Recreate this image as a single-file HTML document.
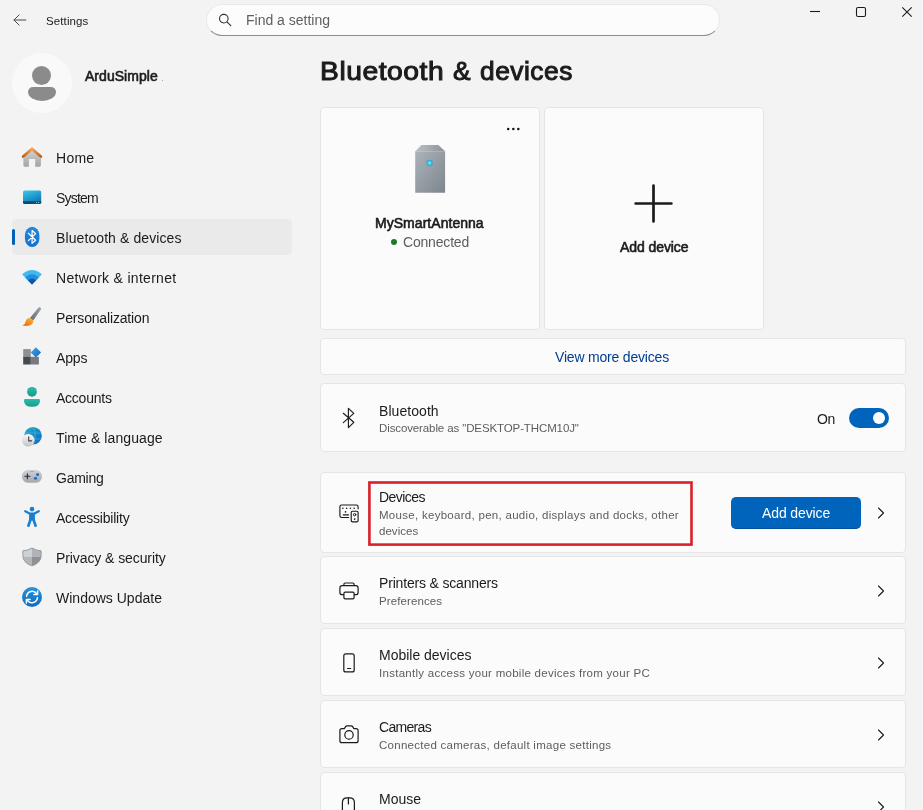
<!DOCTYPE html>
<html>
<head>
<meta charset="utf-8">
<title>Settings</title>
<style>
*{box-sizing:border-box;margin:0;padding:0}
html,body{width:923px;height:810px;overflow:hidden;background:#f3f3f3}
body{font-family:"Liberation Sans",sans-serif;color:#1b1b1b;position:relative;font-size:14px}
.a{position:absolute;white-space:nowrap}
.t{position:absolute;white-space:nowrap;line-height:20px;height:20px;transform-origin:0 50%;will-change:transform;font-size:14px;letter-spacing:0}
.card{position:absolute;background:#fbfbfb;border:1px solid #e5e5e5;border-radius:4px}
.nav{left:56px;color:#1b1b1b}
.t.sub{font-size:11.5px;color:#5d5d5d}
.chev{position:absolute;left:876px;width:10px;height:12px}
svg{position:absolute;overflow:visible}
.t.ttl{height:40px;line-height:40px;font-size:26px;letter-spacing:.4px;color:#1b1b1b;-webkit-text-stroke:1px #1b1b1b}
.sb{-webkit-text-stroke:.6px #1b1b1b;letter-spacing:.3px}
/*FIT*/
#settings{left:46px!important;letter-spacing:0.114px;}
#find{left:246px!important;letter-spacing:-0.008px;}
#ardu{left:85px!important;letter-spacing:0.033px;}
#n1{left:56px!important;letter-spacing:0.267px;}
#n2{left:56px!important;letter-spacing:-0.780px;}
#n3{left:56px!important;letter-spacing:0.094px;}
#n4{left:56px!important;letter-spacing:0.294px;}
#n5{left:56px!important;letter-spacing:-0.164px;}
#n6{left:56px!important;letter-spacing:-0.133px;}
#n7{left:56px!important;letter-spacing:-0.243px;}
#n8{left:56px!important;letter-spacing:0.093px;}
#n9{left:56px!important;letter-spacing:-0.260px;}
#n10{left:56px!important;letter-spacing:-0.217px;}
#n11{left:56px!important;letter-spacing:-0.088px;}
#n12{left:56px!important;letter-spacing:0.008px;}
#title1{left:320px!important;letter-spacing:0.500px;transform:scaleX(1.086);}
#title2{left:453px!important;letter-spacing:0.500px;transform:scaleX(1.011);}
#title3{left:480px!important;letter-spacing:0.500px;transform:scaleX(1.013);}
#msa{left:375px!important;letter-spacing:0.038px;}
#conn{left:403px!important;letter-spacing:-0.188px;}
#adddev{left:620px!important;letter-spacing:-0.078px;}
#viewmore{left:555px!important;letter-spacing:-0.194px;}
#bt{left:379px!important;letter-spacing:0.062px;}
#btsub{left:379px!important;letter-spacing:-0.113px;}
#on{left:817px!important;letter-spacing:-0.300px;}
#dv{left:379px!important;letter-spacing:-0.533px;}
#dvsub1{left:379px!important;letter-spacing:0.287px;}
#dvsub2{left:379px!important;letter-spacing:0.033px;}
#btntxt{left:762px!important;letter-spacing:-0.122px;}
#pr{left:379px!important;letter-spacing:-0.172px;}
#prsub{left:379px!important;letter-spacing:0.100px;}
#mb{left:379px!important;letter-spacing:-0.015px;}
#mbsub{left:379px!important;letter-spacing:0.275px;}
#cm{left:379px!important;letter-spacing:-0.683px;}
#cmsub{left:379px!important;letter-spacing:0.272px;}
#ms{left:379px!important;letter-spacing:0.000px;}
/*ENDFIT*/
</style>
</head>
<body>

<!-- ===== title bar ===== -->
<svg class="a" style="left:13px;top:14px" width="14" height="12" viewBox="0 0 14 12"><path d="M6.1 0.9 L1 6 L6.1 11.1 M1 6 H12.8" fill="none" stroke="#4a4a4a" stroke-width="1" stroke-linecap="round" stroke-linejoin="round"/></svg>
<div class="t" id="settings" style="left:46px;top:11px;font-size:11.5px">Settings</div>

<div class="a" id="search" style="left:206px;top:4px;width:514px;height:31.5px;border-radius:16px;background:#fcfcfc;border:1px solid #e9e9e9;border-bottom-color:#8c8c8c"></div>
<svg class="a" style="left:218px;top:13px" width="14" height="14" viewBox="0 0 14 14"><circle cx="5.8" cy="5.65" r="4.3" fill="none" stroke="#333" stroke-width="1.1"/><path d="M8.95 8.8 L12.8 12.6" stroke="#333" stroke-width="1.15" stroke-linecap="round"/></svg>
<div class="t" id="find" style="left:246px;top:10px;color:#5f5f5f">Find a setting</div>

<!-- window controls -->
<svg class="a" style="left:810px;top:6px" width="10" height="12" viewBox="0 0 10 12"><path d="M0 5.5 H10" stroke="#1b1b1b" stroke-width="1.1"/></svg>
<svg class="a" style="left:856px;top:7px" width="10" height="10" viewBox="0 0 10 10"><rect x="0.5" y="0.5" width="9" height="9" rx="1.5" fill="none" stroke="#1b1b1b" stroke-width="1.1"/></svg>
<svg class="a" style="left:902px;top:7px" width="10" height="10" viewBox="0 0 10 10"><path d="M0.3 0.3 L9.7 9.7 M9.7 0.3 L0.3 9.7" stroke="#1b1b1b" stroke-width="1.1"/></svg>

<!-- ===== profile ===== -->
<div class="a" style="left:12px;top:53px;width:60px;height:60px;border-radius:50%;background:#f9f9f9"></div>
<div class="a" style="left:32px;top:66px;width:19px;height:19px;border-radius:50%;background:#8b8b8b"></div>
<div class="a" style="left:28px;top:87px;width:28px;height:14px;border-radius:5px 5px 14px 14px / 5px 5px 9px 9px;background:#8b8b8b"></div>
<div class="t sb" id="ardu" style="left:84px;top:66px">ArduSimple</div>

<div class="a" style="left:162px;top:80px;width:1px;height:1px;background:#a8a8a8"></div>
<!-- ===== sidebar ===== -->
<div class="a" style="left:12px;top:219px;width:280px;height:35.5px;border-radius:4px;background:#eaeaea"></div>
<div class="a" style="left:12px;top:229px;width:3px;height:16px;border-radius:2px;background:#005fb8"></div>

<div class="t nav" id="n1" style="top:148px">Home</div>
<div class="t nav" id="n2" style="top:188px">System</div>
<div class="t nav" id="n3" style="top:228px">Bluetooth &amp; devices</div>
<div class="t nav" id="n4" style="top:268px">Network &amp; internet</div>
<div class="t nav" id="n5" style="top:308px">Personalization</div>
<div class="t nav" id="n6" style="top:348px">Apps</div>
<div class="t nav" id="n7" style="top:388px">Accounts</div>
<div class="t nav" id="n8" style="top:428px">Time &amp; language</div>
<div class="t nav" id="n9" style="top:468px">Gaming</div>
<div class="t nav" id="n10" style="top:508px">Accessibility</div>
<div class="t nav" id="n11" style="top:548px">Privacy &amp; security</div>
<div class="t nav" id="n12" style="top:588px">Windows Update</div>

<!-- NAVICONS -->
<svg width="0" height="0" style="position:absolute"><defs>
<linearGradient id="gRoof" x1="0" y1="0" x2="0" y2="1"><stop offset="0" stop-color="#f3a552"/><stop offset="1" stop-color="#b9641f"/></linearGradient>
<linearGradient id="gHouse" x1="0" y1="0" x2="0" y2="1"><stop offset="0" stop-color="#d4d4d4"/><stop offset="1" stop-color="#a3a3a3"/></linearGradient>
<linearGradient id="gSys" x1="0" y1="0" x2="0.5" y2="1"><stop offset="0" stop-color="#3acbea"/><stop offset="1" stop-color="#0f78b4"/></linearGradient>
<linearGradient id="gBt" x1="0" y1="0" x2="0" y2="1"><stop offset="0" stop-color="#2589de"/><stop offset="1" stop-color="#0f72cc"/></linearGradient>
<linearGradient id="gHandle" x1="1" y1="0" x2="0" y2="1"><stop offset="0" stop-color="#a0a6ab"/><stop offset="1" stop-color="#646b71"/></linearGradient>
<linearGradient id="gTip" x1="0.8" y1="0" x2="0.2" y2="1"><stop offset="0" stop-color="#f9b43f"/><stop offset="1" stop-color="#e4701a"/></linearGradient>
<linearGradient id="gDia" x1="0" y1="0" x2="1" y2="1"><stop offset="0" stop-color="#42a8f0"/><stop offset="1" stop-color="#0c66bb"/></linearGradient>
<linearGradient id="gAcc" x1="0" y1="0" x2="0" y2="1"><stop offset="0" stop-color="#2cbcaa"/><stop offset="1" stop-color="#17998a"/></linearGradient>
<linearGradient id="gGlobe" x1="0" y1="0" x2="1" y2="1"><stop offset="0" stop-color="#22b4c8"/><stop offset="1" stop-color="#0f62c4"/></linearGradient>
<linearGradient id="gClock" x1="0" y1="0" x2="0" y2="1"><stop offset="0" stop-color="#fafafa"/><stop offset="1" stop-color="#c4c4c4"/></linearGradient>
<linearGradient id="gPad" x1="0" y1="0" x2="0" y2="1"><stop offset="0" stop-color="#cfd2d6"/><stop offset="1" stop-color="#a4a8ad"/></linearGradient>
<linearGradient id="gUpd" x1="0" y1="0" x2="0" y2="1"><stop offset="0" stop-color="#2592de"/><stop offset="1" stop-color="#0f6cbd"/></linearGradient>
</defs></svg>

<!-- Home -->
<svg class="a" style="left:20px;top:146px" width="24" height="22" viewBox="20 146 24 22">
<path d="M23.4 156.5 L32 149.5 L40.9 156.5 V165.3 Q40.9 166.7 39.5 166.7 H35.2 V159 H28.9 V166.7 H24.8 Q23.4 166.7 23.4 165.3Z" fill="url(#gHouse)"/>
<path d="M23.1 156.6 L32 148.7 L40.9 156.6" fill="none" stroke="url(#gRoof)" stroke-width="2.7" stroke-linecap="round" stroke-linejoin="round"/>
</svg>

<!-- System -->
<svg class="a" style="left:22px;top:189px" width="20" height="16" viewBox="22 189 20 16">
<rect x="23" y="190.4" width="18.2" height="13.5" rx="1.6" fill="url(#gSys)"/>
<path d="M23 201.2 H41.2 V202.3 Q41.2 203.9 39.6 203.9 H24.6 Q23 203.9 23 202.3Z" fill="#0c4a7a"/>
<circle cx="36.6" cy="202.6" r="0.6" fill="#9ad8f0"/><circle cx="38.7" cy="202.6" r="0.6" fill="#9ad8f0"/>
</svg>

<!-- Bluetooth -->
<svg class="a" style="left:24px;top:226px" width="16" height="22" viewBox="24 226 16 22">
<rect x="24.9" y="226.8" width="14.5" height="20.3" rx="7.25" ry="8.6" fill="url(#gBt)"/>
<path d="M28.4 233.3 L35.6 240.3 L32.1 243.4 V230.5 L35.6 233.6 L28.4 240.6" fill="none" stroke="#fff" stroke-width="1.25" stroke-linejoin="round" stroke-linecap="round"/>
</svg>

<!-- Network -->
<svg class="a" style="left:21px;top:269px" width="22" height="17" viewBox="21 269 22 17">
<path d="M32 284.6 L22.1 274.3 Q32 265.8 41.9 274.3Z" fill="#41b8f0"/>
<path d="M32 284.6 L25.1 277.4 Q32 271.3 38.9 277.4Z" fill="#1f8fdc"/>
<path d="M32 284.6 L28 280.4 Q32 276.8 36 280.4Z" fill="#0f57a8"/>
</svg>

<!-- Personalization -->
<svg class="a" style="left:21px;top:306px" width="22" height="22" viewBox="21 306 22 22">
<path d="M38.6 307.5 Q40.9 306.3 41.2 309.1 L33.3 320.6 L29.9 318.1Z" fill="url(#gHandle)"/>
<path d="M30 317.9 Q26.3 317.6 25.7 321.5 Q25.3 324.2 22.4 325.5 Q27.5 326.7 31 324.7 Q33.7 323.1 33.4 320.5Z" fill="url(#gTip)"/>
</svg>

<!-- Apps -->
<svg class="a" style="left:22px;top:346px" width="20" height="20" viewBox="22 346 20 20">
<rect x="23.2" y="349.1" width="7.6" height="7.8" fill="#8d9196"/>
<rect x="23.2" y="356.8" width="7.6" height="7.7" fill="#45494d"/>
<rect x="30.8" y="356.8" width="8.1" height="7.7" fill="#777b80"/>
<path d="M35.9 347.3 L41.1 352.4 L35.9 357.6 L30.8 352.4Z" fill="url(#gDia)"/>
</svg>

<!-- Accounts -->
<svg class="a" style="left:23px;top:386px" width="18" height="22" viewBox="23 386 18 22">
<circle cx="32" cy="391.8" r="4.9" fill="url(#gAcc)"/>
<path d="M25.4 399.1 H38.6 Q40 399.1 40 400.5 Q40 406.8 32 406.8 Q24 406.8 24 400.5 Q24 399.1 25.4 399.1Z" fill="url(#gAcc)"/>
</svg>

<!-- Time & language -->
<svg class="a" style="left:21px;top:426px" width="22" height="22" viewBox="21 426 22 22">
<circle cx="33" cy="435.7" r="8.8" fill="url(#gGlobe)"/>
<path d="M33 427 Q37.5 435.7 33 444.4 M24.6 433 H41.4 M25 439 H41" fill="none" stroke="#5fc3e8" stroke-width="0.6" opacity="0.8"/>
<circle cx="28.2" cy="440.2" r="6.3" fill="url(#gClock)"/>
<path d="M28.7 436.8 V440.9 H31.6" fill="none" stroke="#4a3c44" stroke-width="1.1" stroke-linecap="round" stroke-linejoin="round"/>
</svg>

<!-- Gaming -->
<svg class="a" style="left:21px;top:469px" width="22" height="15" viewBox="21 469 22 15">
<rect x="21.9" y="470" width="20.1" height="12.8" rx="6.4" fill="url(#gPad)"/>
<path d="M27.4 473.8 V478.8 M24.9 476.3 H29.9" stroke="#2a2a2a" stroke-width="1.1" stroke-linecap="round"/>
<circle cx="37.6" cy="474.5" r="1.55" fill="#1c6fc6"/><circle cx="35.5" cy="478.3" r="1.55" fill="#1c6fc6"/>
<circle cx="31" cy="471.3" r="0.45" fill="#3a3a3a"/><circle cx="33" cy="471.3" r="0.45" fill="#3a3a3a"/>
</svg>

<!-- Accessibility -->
<svg class="a" style="left:23px;top:505px" width="18" height="23" viewBox="23 505 18 23">
<circle cx="32" cy="509.1" r="2.35" fill="#1b7fd0"/>
<path d="M25.3 511.3 L30 513.7 H34 L38.7 511.3" fill="none" stroke="#1b7fd0" stroke-width="2.4" stroke-linecap="round" stroke-linejoin="round"/>
<path d="M29.1 513 H34.9 V520.6 H29.1Z" fill="#1b7fd0"/>
<path d="M30.5 519.6 L28.4 525.7 M33.5 519.6 L35.6 525.7" fill="none" stroke="#1b7fd0" stroke-width="2.7" stroke-linecap="round"/>
</svg>

<!-- Privacy -->
<svg class="a" style="left:22px;top:547px" width="20" height="20" viewBox="22 547 20 20">
<clipPath id="shc"><path d="M32 548 Q36 550.6 41.1 550.8 V556 Q41.1 562.6 32 565.9 Q22.9 562.6 22.9 556 V550.8 Q28 550.6 32 548Z"/></clipPath>
<g clip-path="url(#shc)">
<rect x="22" y="547" width="10" height="9.6" fill="#cfd2d5"/>
<rect x="32" y="547" width="10" height="9.6" fill="#b0b4b8"/>
<rect x="22" y="556.6" width="10" height="10" fill="#b3b7bb"/>
<rect x="32" y="556.6" width="10" height="10" fill="#8e9297"/>
</g>
<path d="M32 548 Q36 550.6 41.1 550.8 V556 Q41.1 562.6 32 565.9 Q22.9 562.6 22.9 556 V550.8 Q28 550.6 32 548Z" fill="none" stroke="#8f9398" stroke-width="0.9"/>
</svg>

<!-- Windows Update -->
<svg class="a" style="left:21px;top:586px" width="22" height="22" viewBox="21 586 22 22">
<circle cx="32" cy="597" r="10" fill="url(#gUpd)"/>
<path d="M26.6 596.2 A5.5 5.5 0 0 1 36.6 593.6" fill="none" stroke="#fff" stroke-width="1.5" stroke-linecap="round"/>
<path d="M37.6 590.9 V594.6 H33.9" fill="none" stroke="#fff" stroke-width="1.5" stroke-linecap="round" stroke-linejoin="round"/>
<path d="M37.4 597.8 A5.5 5.5 0 0 1 27.4 600.4" fill="none" stroke="#fff" stroke-width="1.5" stroke-linecap="round"/>
<path d="M26.4 603.1 V599.4 H30.1" fill="none" stroke="#fff" stroke-width="1.5" stroke-linecap="round" stroke-linejoin="round"/>
</svg>

<!-- /NAVICONS -->

<!-- ===== main ===== -->
<div class="t ttl" id="title1" style="left:320px;top:51px">Bluetooth</div>
<div class="t ttl" id="title2" style="left:452px;top:51px">&amp;</div>
<div class="t ttl" id="title3" style="left:480px;top:51px">devices</div>

<div class="card" style="left:320px;top:107px;width:220px;height:223px"></div>
<div class="card" style="left:544px;top:107px;width:220px;height:223px"></div>


<!-- card 1 -->
<svg class="a" style="left:505px;top:126px" width="16" height="6" viewBox="505 126 16 6"><circle cx="508.2" cy="128.9" r="1.25" fill="#111"/><circle cx="513.3" cy="128.9" r="1.25" fill="#111"/><circle cx="518.3" cy="128.9" r="1.25" fill="#111"/></svg>
<svg class="a" style="left:414px;top:144px" width="32" height="50" viewBox="414 144 32 50">
<defs><linearGradient id="tw" x1="0" y1="0" x2="1" y2="1"><stop offset="0" stop-color="#adb3ba"/><stop offset="1" stop-color="#7d858d"/></linearGradient>
<linearGradient id="lid" x1="0" y1="0" x2="1" y2="0"><stop offset="0" stop-color="#bcc1c7"/><stop offset="1" stop-color="#8c939a"/></linearGradient>
<radialGradient id="led"><stop offset="0" stop-color="#8eeeff"/><stop offset="0.6" stop-color="#2dc4e6"/><stop offset="1" stop-color="#3f9fbe"/></radialGradient></defs>
<path d="M415.2 151.3 H445.1 V192.3 Q445.1 192.8 444.6 192.8 H415.7 Q415.2 192.8 415.2 192.3Z" fill="url(#tw)"/>
<path d="M421.4 145.1 H438.4 L445.1 151.3 H415.2Z" fill="url(#lid)"/>
<circle cx="429.6" cy="163" r="3.2" fill="url(#led)"/>
</svg>
<div class="t sb" id="msa" style="left:374px;top:213px">MySmartAntenna</div>
<div class="a" style="left:391px;top:239px;width:6px;height:6px;border-radius:50%;background:#1b7a2a"></div>
<div class="t" id="conn" style="left:403px;top:232px;color:#5d5d5d">Connected</div>

<!-- card 2 -->
<svg class="a" style="left:634px;top:184px" width="38" height="38" viewBox="0 0 38 38"><path d="M19.5 1.6 V37.4 M1.6 19.5 H37.4" stroke="#1b1b1b" stroke-width="2.7" stroke-linecap="round"/></svg>
<div class="t sb" id="adddev" style="left:619px;top:237px">Add device</div>


<div class="card" style="left:320px;top:338px;width:586px;height:37px"></div>
<div class="t" id="viewmore" style="left:555px;top:347px;color:#003e92">View more devices</div>

<div class="card" style="left:320px;top:383px;width:586px;height:69px"></div>
<div class="card" style="left:320px;top:472px;width:586px;height:81px"></div>
<div class="card" style="left:320px;top:556px;width:586px;height:68px"></div>
<div class="card" style="left:320px;top:628px;width:586px;height:68px"></div>
<div class="card" style="left:320px;top:700px;width:586px;height:68px"></div>
<div class="card" style="left:320px;top:772px;width:586px;height:68px"></div>


<!-- Bluetooth row -->
<svg class="a" style="left:342px;top:407px" width="14" height="22" viewBox="342 407 14 22"><path d="M343.3 413.3 L353.8 422.3 L348.4 427.6 V408.4 L353.8 413.4 L343.3 422.6" fill="none" stroke="#1b1b1b" stroke-width="1.15" stroke-linejoin="round" stroke-linecap="round"/></svg>
<div class="t" id="bt" style="left:379px;top:401px">Bluetooth</div>
<div class="t sub" id="btsub" style="left:379px;top:418px">Discoverable as &quot;DESKTOP-THCM10J&quot;</div>
<div class="t" id="on" style="left:817px;top:409px">On</div>
<div class="a" style="left:849px;top:408px;width:40px;height:20px;border-radius:10px;background:#0064bc"></div>
<div class="a" style="left:873px;top:412px;width:12px;height:12px;border-radius:50%;background:#fff"></div>

<!-- Devices row -->
<div class="t" id="dv" style="left:379px;top:487px">Devices</div>
<div class="t sub" id="dvsub1" style="left:379px;top:505px">Mouse, keyboard, pen, audio, displays and docks, other</div>
<div class="t sub" id="dvsub2" style="left:379px;top:521px">devices</div>
<svg class="a" id="red" style="left:366px;top:479px" width="330" height="70" viewBox="366 479 330 70"><rect x="369.4" y="482.5" width="322.1" height="62.1" fill="none" stroke="#d9212b" stroke-width="2.6"/></svg>
<div class="a" id="btn" style="left:731px;top:497px;width:130px;height:32px;border-radius:5px;background:#0064bc;border-bottom:1px solid #00509a"></div>
<div class="t" id="btntxt" style="left:762px;top:503px;color:#fff">Add device</div>

<!-- Printers -->
<div class="t" id="pr" style="left:379px;top:573px">Printers &amp; scanners</div>
<div class="t sub" id="prsub" style="left:379px;top:591px">Preferences</div>
<!-- Mobile -->
<div class="t" id="mb" style="left:379px;top:645px">Mobile devices</div>
<div class="t sub" id="mbsub" style="left:379px;top:663px">Instantly access your mobile devices from your PC</div>
<!-- Cameras -->
<div class="t" id="cm" style="left:379px;top:717px">Cameras</div>
<div class="t sub" id="cmsub" style="left:379px;top:735px">Connected cameras, default image settings</div>
<!-- Mouse -->
<div class="t" id="ms" style="left:379px;top:789px">Mouse</div>

<!-- chevrons -->
<svg class="a" style="left:877px;top:507px" width="8" height="12" viewBox="0 0 8 12"><path d="M1.5 1 L6.5 6 L1.5 11" fill="none" stroke="#1b1b1b" stroke-width="1.1" stroke-linecap="round" stroke-linejoin="round"/></svg>
<svg class="a" style="left:877px;top:585px" width="8" height="12" viewBox="0 0 8 12"><path d="M1.5 1 L6.5 6 L1.5 11" fill="none" stroke="#1b1b1b" stroke-width="1.1" stroke-linecap="round" stroke-linejoin="round"/></svg>
<svg class="a" style="left:877px;top:657px" width="8" height="12" viewBox="0 0 8 12"><path d="M1.5 1 L6.5 6 L1.5 11" fill="none" stroke="#1b1b1b" stroke-width="1.1" stroke-linecap="round" stroke-linejoin="round"/></svg>
<svg class="a" style="left:877px;top:729px" width="8" height="12" viewBox="0 0 8 12"><path d="M1.5 1 L6.5 6 L1.5 11" fill="none" stroke="#1b1b1b" stroke-width="1.1" stroke-linecap="round" stroke-linejoin="round"/></svg>
<svg class="a" style="left:877px;top:801px" width="8" height="12" viewBox="0 0 8 12"><path d="M1.5 1 L6.5 6 L1.5 11" fill="none" stroke="#1b1b1b" stroke-width="1.1" stroke-linecap="round" stroke-linejoin="round"/></svg>

<!-- ROWICONS -->
<!-- devices icon -->
<svg class="a" style="left:338px;top:503px" width="22" height="21" viewBox="338 503 22 21" fill="none" stroke="#1b1b1b" stroke-width="1.15" stroke-linecap="round" stroke-linejoin="round">
<path d="M348.6 517.5 H341.6 Q339.9 517.5 339.9 515.8 V506.7 Q339.9 505 341.6 505 H356.4 Q358.1 505 358.1 506.7 V508.8"/>
<rect x="351.2" y="511.2" width="6.9" height="10.7" rx="1.4"/>
<circle cx="354.65" cy="514.7" r="1.2" stroke-width="1"/>
<g fill="#1b1b1b" stroke="none"><circle cx="354.65" cy="519.1" r="0.85"/>
<circle cx="342.9" cy="508.2" r="0.8"/><circle cx="346.7" cy="508.2" r="0.8"/><circle cx="350.4" cy="508.2" r="0.8"/><circle cx="354.2" cy="508.2" r="0.8"/><circle cx="345.5" cy="511.9" r="0.8"/></g>
<path d="M343.3 514.9 H348.5" stroke-width="1.2"/>
</svg>

<!-- printer -->
<svg class="a" style="left:338px;top:581px" width="22" height="20" viewBox="338 581 22 20" fill="none" stroke="#1b1b1b" stroke-width="1.2" stroke-linejoin="round">
<path d="M343.9 585.6 V584.2 Q343.9 583 345.1 583 H352.9 Q354.1 583 354.1 584.2 V585.6"/>
<path d="M343.9 594.7 H342.2 Q339.9 594.7 339.9 592.4 V588 Q339.9 585.7 342.2 585.7 H355.8 Q358.1 585.7 358.1 588 V592.4 Q358.1 594.7 355.8 594.7 H354.1"/>
<rect x="343.9" y="592.2" width="10.2" height="6.6" rx="1.3"/>
</svg>

<!-- phone -->
<svg class="a" style="left:342px;top:652px" width="14" height="22" viewBox="342 652 14 22" fill="none" stroke="#1b1b1b" stroke-width="1.2" stroke-linecap="round">
<rect x="343.8" y="653.9" width="10.4" height="18" rx="2"/>
<path d="M347.5 668.5 H350.7"/>
</svg>

<!-- camera -->
<svg class="a" style="left:338px;top:724px" width="22" height="21" viewBox="338 724 22 21" fill="none" stroke="#1b1b1b" stroke-width="1.2" stroke-linejoin="round">
<path d="M341.9 728.6 H344.3 L345.6 726.6 Q346.1 725.9 346.9 725.9 H351.3 Q352.1 725.9 352.6 726.6 L353.9 728.6 H356.1 Q358.1 728.6 358.1 730.6 V740.7 Q358.1 742.7 356.1 742.7 H341.9 Q339.9 742.7 339.9 740.7 V730.6 Q339.9 728.6 341.9 728.6Z"/>
<circle cx="349" cy="734.9" r="4.2"/>
</svg>

<!-- mouse -->
<svg class="a" style="left:341px;top:796px" width="15" height="14" viewBox="341 796 15 14" fill="none" stroke="#1b1b1b" stroke-width="1.2" stroke-linecap="round">
<path d="M342.4 812 V802.6 Q342.4 797.8 347.2 797.8 H349.6 Q354.4 797.8 354.4 802.6 V812"/>
<path d="M348.4 797.8 V804"/>
</svg>

<!-- /ROWICONS -->


</body>
</html>
